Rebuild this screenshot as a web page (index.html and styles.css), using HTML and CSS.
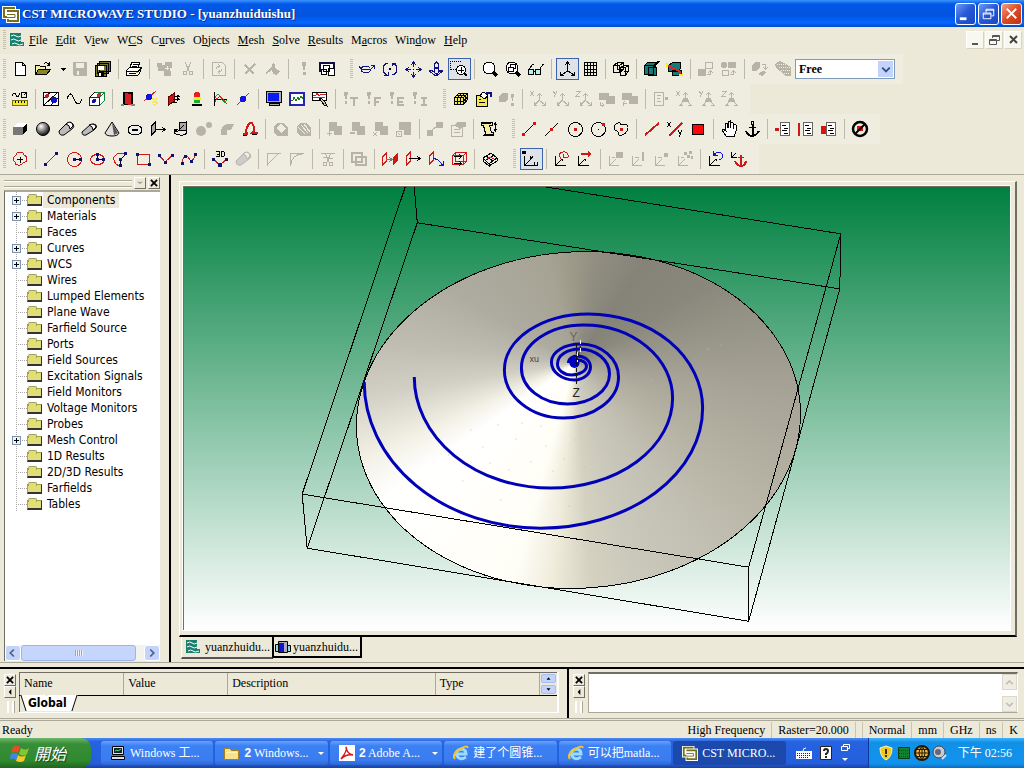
FILE: index.html
```html
<!DOCTYPE html>
<html lang="en">
<head>
  <meta charset="UTF-8">
  <meta name="viewport" content="width=device-width, initial-scale=1.0">
  <title>CST MICROWAVE STUDIO - [yuanzhuiduishu]</title>
  <link rel="stylesheet" href="styles.css">
</head>
<body>
  <header class="TitleBar">
    <svg class="TitleBar_Logo" viewBox="0 0 18 18" aria-hidden="true"><path fill="#fff" d="M0 1h14v3h4v14H4v-4H0z"/><path fill="none" stroke="#75701c" stroke-width="2" d="M13 3H2v9h3M5 6h11v10H6v-2"/><path fill="none" stroke="#75701c" d="M5 9.500h8v3H5"/></svg>
    <h1 class="TitleBar_Text">CST MICROWAVE STUDIO - [yuanzhuiduishu]</h1>
    <button class="WinButton" aria-label="Minimize"><svg viewBox="0 0 20 20"><path stroke="#fff" stroke-width="3" d="M4 15.500h7"/></svg></button>
    <button class="WinButton" aria-label="Restore"><svg viewBox="0 0 20 20"><path fill="none" stroke="#fff" d="M7.500 9V5.500h8v7H13M7 6.500h9M4.500 9.500h8v6h-8zM4 10.500h9"/></svg></button>
    <button class="WinButton -close" aria-label="Close"><svg viewBox="0 0 20 20"><path stroke="#fff" stroke-width="2" d="M5 5l10 10M15 5L5 15"/></svg></button>
  </header>

  <nav class="MenuBar" aria-label="Menu">
    <span class="Grip"></span>
    <svg class="MenuBar_Icon" viewBox="0 0 16 14" aria-hidden="true"><path fill="#17806f" d="M1 0h11v9h3v4H1z"/><path fill="none" stroke="#fff" d="M2 3q3-2 5 0t5 0M2 7q3-2 5 0t5 0M3 11q3-2 5 0t6 0"/></svg>
    <a href="#"><u>F</u>ile</a>
    <a href="#"><u>E</u>dit</a>
    <a href="#">V<u>i</u>ew</a>
    <a href="#">W<u>C</u>S</a>
    <a href="#">C<u>u</u>rves</a>
    <a href="#">O<u>b</u>jects</a>
    <a href="#"><u>M</u>esh</a>
    <a href="#"><u>S</u>olve</a>
    <a href="#"><u>R</u>esults</a>
    <a href="#">M<u>a</u>cros</a>
    <a href="#">Win<u>d</u>ow</a>
    <a href="#"><u>H</u>elp</a>
    <div class="MenuBar_Controls">
      <button class="ChildButton" aria-label="Minimize document"><svg viewBox="0 0 16 16"><path stroke="#555" stroke-width="2" d="M5 12h6"/></svg></button>
      <button class="ChildButton" aria-label="Restore document"><svg viewBox="0 0 16 16"><path fill="none" stroke="#555" d="M6.500 6V3.500h7v5H11M6 4.500h8M3.500 7.500h7v5h-7zM3 8.500h8"/></svg></button>
      <button class="ChildButton" aria-label="Close document"><svg viewBox="0 0 16 16"><path stroke="#444" stroke-width="2" d="M5 4l7 7M12 4l-7 7"/></svg></button>
    </div>
  </nav>

  <div class="ToolRow">
    <div class="Toolbar">
      <span class="Grip"></span>
      <button class="Tool" aria-label="New"><svg viewBox="0 0 18 18"><path fill="#fff" d="M4.500 2.500h7l3 3v10h-10zM11.500 2.500v3h3"/></svg></button>
      <button class="Tool" aria-label="Open"><svg viewBox="0 0 18 18"><path fill="#f4ef9c" d="M1.500 14.500v-9h4l1 1h5v3"/><path fill="#8a8628" d="M1.500 14.500l3-5h12l-4 5z"/><path d="M10 3.500q3-2 5 1M15.500 2v3h-3"/></svg></button>
      <button class="Tool -narrow" aria-label="Recent files"><svg viewBox="3 0 12 18"><path class="solid" d="M6 8h6l-3 3z"/></svg></button>
      <button class="Tool" aria-label="Save" disabled><svg viewBox="0 0 18 18"><path class="solid" fill-rule="evenodd" d="M2 2h14v14H3l-1-1zM5 3v5h8V3zM6 11v4h2v-4z"/></svg></button>
      <button class="Tool" aria-label="Save all"><svg viewBox="0 0 18 18"><path fill="#77752c" d="M5.500 1.500h11v10h-11zM3.500 3.500h11v10h-11zM1.500 5.500h11v11h-11z"/><path fill="#fff" stroke="none" d="M4 6h6v4H4z"/><path class="solid" d="M4 12h6v4H4z"/><path fill="#fff" stroke="none" d="M5 13h2v3H5z"/></svg></button>
      <span class="Sep"></span>
      <button class="Tool" aria-label="Print"><svg viewBox="0 0 18 18"><path fill="#fff" d="M5 7l2-5h8l-2 5zM1.500 10.500l3-3h12l-2 6-2 2h-11z"/><path d="M8 4.500h5M7 6.500h5M2 11.500h11l3-3M4 13.500h7"/><path stroke="#b8b020" d="M11 12.500h2"/></svg></button>
      <span class="Sep"></span>
      <button class="Tool" aria-label="Copy view" disabled><svg viewBox="0 0 18 18"><path class="solid" d="M1 3h5v2h3V2h7v6h-2v3h1v5H8v-5H2z"/><path stroke="#efede0" d="M9 8.500h4M11 6v4"/></svg></button>
      <button class="Tool" aria-label="Cut" disabled><svg viewBox="0 0 18 18"><path d="M6 2l4 9M12 2l-4 9"/><circle cx="6" cy="13" r="2"/><circle cx="12" cy="13" r="2"/></svg></button>
      <span class="Sep"></span>
      <button class="Tool" aria-label="Update" disabled><svg viewBox="0 0 18 18"><path d="M2.500 2.500h10l3 3v10h-13zM6 9q0-3 4-3M8 4l2 2-2 2M12 9q0 3-4 3M10 10l-2 2 2 2"/></svg></button>
      <span class="Sep"></span>
      <button class="Tool" aria-label="Delete" disabled><svg viewBox="0 0 18 18"><path stroke-width="2" d="M4 5l9 9M14 4L4 14"/></svg></button>
      <button class="Tool" aria-label="Rename" disabled><svg viewBox="0 0 18 18"><path class="solid" d="M1 13l7-7 1-3 2 1v4l5 3-3 4-4-1-1-4-6 4z"/></svg></button>
      <span class="Sep"></span>
      <button class="Tool" aria-label="Abort" disabled><svg viewBox="0 0 18 18"><path class="solid" d="M7 2h4l-1 8H8zM8 12h3v3H8z"/></svg></button>
      <button class="Tool" aria-label="Windows"><svg viewBox="0 0 18 18"><path fill="#fff" stroke="#101040" stroke-width="2" d="M2 3h14v8H2z"/><path fill="#fff" d="M5.500 5.500h6v6h-6zM3.500 9.500h5v5h-5zM10.500 8.500h6v7h-6z"/></svg></button>
    </div>
    <div class="Toolbar">
      <span class="Grip"></span>
      <button class="Tool" aria-label="Rotate"><svg viewBox="0 0 18 18"><g stroke="#101080"><path d="M1 6l2 3h10l3-3M13 5.500h3v3"/><path d="M13 10q-2 3-6 3-4-1-4-4 1-3 5-3 3 0 4 2"/></g></svg></button>
      <button class="Tool" aria-label="Rotate in plane"><svg viewBox="0 0 18 18"><path stroke="#101080" d="M7 3Q2 4 2 9q0 4 4 6M3 15h4v-3M4 14h2M11 15q5-1 5-6 0-4-4-6M15 3h-4v3M12 4h2"/><path class="solid" d="M8 8h2v2H8z"/></svg></button>
      <button class="Tool" aria-label="Pan"><svg viewBox="0 0 18 18"><path stroke="#101080" d="M9.500 2v5M9.500 12v5M2 9.500h5M12 9.500h5M7 5l2.500-3L12 5M7 14l2.500 3 2.500-3M5 7L2 9.500 5 12M14 7l3 2.500-3 2.500"/><path class="solid" d="M9 9h1v1H9z"/></svg></button>
      <button class="Tool" aria-label="Dynamic zoom"><svg viewBox="0 0 18 18"><path stroke="#101080" d="M9.500 2l-2 2v3h4V4zM7 8.500h5M6 10l-4 1 7 5 7-5-4-1M7.500 8v3h-2l4 3 4-3h-2V8"/></svg></button>
      <button class="Tool -pressed" aria-label="Zoom window"><svg viewBox="0 0 18 18"><path stroke-dasharray="1 1" d="M.5 10V1.500H11M1 9.500h5"/><circle cx="11" cy="10" r="4.500" fill="#fff"/><path d="M8 10.500h6M11.500 7v6"/><path stroke-width="2" d="M14 13l3 3"/></svg></button>
      <span class="Sep"></span>
      <button class="Tool" aria-label="Zoom"><svg viewBox="0 0 18 18"><circle cx="8" cy="8" r="6" fill="#fff"/><path stroke-width="3" d="M12 12l4 4"/></svg></button>
      <button class="Tool" aria-label="Zoom to selection"><svg viewBox="0 0 18 18"><circle cx="8" cy="8" r="6" fill="#fff"/><path d="M4.500 7.500h5v4h-5zM6.500 7V4.500h5v4H9"/><path stroke-width="3" d="M12 12l4 4"/></svg></button>
      <button class="Tool" aria-label="View options"><svg viewBox="0 0 18 18"><circle cx="4" cy="12" r="3" fill="#b8f0f0"/><circle cx="11" cy="12" r="3" fill="#b8f0f0"/><path d="M7 11h1M2 9l4-5 1 1M13 9l3-5 1 1"/></svg></button>
      <span class="Sep"></span>
      <button class="Tool -pressed" aria-label="Axes"><svg viewBox="0 0 18 18"><path d="M9.500 2v9l-6 4M10 11l6 4M7 5l2.500-3L12 5M6 15.500H2.500V12M13 15.500h3.500V12"/></svg></button>
      <button class="Tool" aria-label="Working plane"><svg viewBox="0 0 18 18"><path d="M3.500 2.500h12v13h-12zM6.500 2v13M9.500 2v13M12.500 2v13M3 5.500h12M3 9.500h12M3 12.500h12"/></svg></button>
      <span class="Sep"></span>
      <button class="Tool" aria-label="Wireframe"><svg viewBox="0 0 18 18"><path d="M1.500 5.500l4-3h6v7l-4 3h-6zM2 5.500h5.500v7M7.500 5.500l4-3M5.500 3v6.500h6M8.500 7.500l3-2h5v6l-3 3.500h-5zM9 7.500h4.500v7M13.500 7.500l3-2M11.500 11.500h5"/></svg></button>
      <span class="Sep"></span>
      <button class="Tool" aria-label="Cutting plane"><svg viewBox="0 0 18 18"><path fill="#157b78" d="M1.500 5.500l3-3h9l-3 3zM1.500 5.500h9v9h-9zM5.500 7.500h8v8h-8z"/><path stroke-width="2" d="M10 8l6-7"/></svg></button>
      <button class="Tool" aria-label="Field at cutting plane"><svg viewBox="0 0 18 18"><path fill="#157b78" d="M2.500 5.500l4-3h8v6l-3 3h-9zM6.500 10.500h9v5h-9z"/><path stroke="#e32222" stroke-width="2" d="M1 5l14 7"/><path stroke="#f4ef20" stroke-width="2" d="M1 3v4M13 15h4"/></svg></button>
      <span class="Sep"></span>
      <button class="Tool" aria-label="Show hidden" disabled><svg viewBox="0 0 18 18"><path class="solid" d="M1 9h8v7H1z"/><path d="M8.500 2.500h7v6h-7zM10 14.500h3.500V11M11 13l2.500-2 2.500 2"/></svg></button>
      <button class="Tool" aria-label="Hide selected" disabled><svg viewBox="0 0 18 18"><path class="solid" d="M8 2h8v6H8z"/><circle class="solid" cx="4" cy="5" r="3"/><path d="M2.500 10.500h6v5h-6zM10 14.500h3.500V11M11 13l2.500-2 2.500 2"/></svg></button>
      <span class="Sep"></span>
      <button class="Tool" aria-label="Transform" disabled><svg viewBox="0 0 18 18"><path class="solid" d="M1 5l3-3h5v5L6 11H1zM7 14l5-3 3 1-4 4z"/><path d="M11 4.500h3.500V9M12 7l2.500 2L17 7"/></svg></button>
      <button class="Tool" aria-label="Background" disabled><svg viewBox="0 0 18 18"><path class="solid" d="M1 4l5-3 6 3 5 3v9h-5l-6-5-4-3z"/><path stroke="#efede0" stroke-dasharray="1 1" d="M3 4.500h9M5 7.500h11M7 10.500h9M10 13.500h6"/></svg></button>
      <div class="Combo">
        <select aria-label="Selection mode"><option>Free</option></select>
        <svg class="Combo_Arrow" viewBox="0 0 15 17" aria-hidden="true"><path fill="none" stroke="#35507f" stroke-width="2" d="M4 7l4 4 4-4"/></svg>
      </div>
    </div>
  </div>

  <div class="ToolRow">
    <div class="Toolbar">
      <span class="Grip"></span>
      <button class="Tool" aria-label="Units"><svg viewBox="0 0 18 18"><path fill="#f4e830" stroke="#77700c" d="M1.500 10.500h15v5h-15z"/><path d="M4.500 11v2M7.500 11v2M10.500 11v2M13.500 11v2M1 6q2-5 4-1t4-2"/><circle cx="13" cy="5" r="3"/><path d="M13 5l2-2"/></svg></button>
      <span class="Sep"></span>
      <button class="Tool" aria-label="Boundary"><svg viewBox="0 0 18 18"><path fill="#fff" d="M1.500 2.500h15v13h-15z"/><path d="M1 16L16 2M1 9l8-7M8 16l8-8"/><circle cx="5" cy="6" r="2" fill="#d01818" stroke="none"/><circle cx="12" cy="10" r="3" fill="#1515c0" stroke="none"/></svg></button>
      <button class="Tool" aria-label="Frequency"><svg viewBox="0 0 18 18"><path d="M2 9Q5 0 8 7t5 7q2 0 4-5"/></svg></button>
      <button class="Tool" aria-label="Background material"><svg viewBox="0 0 18 18"><path fill="#fff" d="M1.500 7.500l5-5h10v8l-5 5h-10z"/><path stroke="#158040" d="M6.500 2.500h10v8l-5 5v-8l5-5"/><path stroke="#1515a0" d="M1.500 7.500h10v8h-10z"/><circle cx="6" cy="11" r="2" fill="#1515a0" stroke="none"/><circle cx="11" cy="5" r="2" fill="#c03030" stroke="none"/></svg></button>
      <span class="Sep"></span>
      <button class="Tool" aria-label="Ports"><svg viewBox="0 0 18 18"><path class="solid" d="M4 2h10v13H4z"/><path fill="#d42020" stroke="none" d="M6 3l6 1v11l-6-1z"/><path stroke="#888" stroke-width="2" d="M2 15h3M12 15h4"/></svg></button>
      <button class="Tool" aria-label="Discrete port"><svg viewBox="0 0 18 18"><path stroke="#d02020" d="M2 11L14 1"/><circle cx="7" cy="7" r="3" fill="#1212dd" stroke="none"/><path stroke="#f4ee30" stroke-width="2" stroke-dasharray="2 1" d="M10 9h4l-2 3h4l-5 4"/></svg></button>
      <button class="Tool" aria-label="Plane wave"><svg viewBox="0 0 18 18"><path fill="#c51818" stroke="#600" d="M3.500 7l6-4v8l-6 4z"/><path d="M9 6.500h4M8 9.500h5M7 12.500h5M12 5l2 1.500L12 8M12 8l2 1.500-2 1.500"/></svg></button>
      <button class="Tool" aria-label="Monitors"><svg viewBox="0 0 18 18"><path fill="#e52020" stroke="none" d="M6 5q0-3 3-3t3 3v2H6z"/><path fill="#f4ee20" stroke="none" d="M5 7h8v3H5z"/><path fill="#18b028" stroke="none" d="M6 10h6v3H6z"/><path stroke-width="2" d="M4 15h10"/></svg></button>
      <button class="Tool" aria-label="Voltage monitor"><svg viewBox="0 0 18 18"><path d="M3.500 2v14M3 9.500h13"/><path stroke="#18a030" d="M4 8q3-7 6 0t6 2"/><path stroke="#d02020" d="M4 12q4-8 7-4t5 6"/></svg></button>
      <button class="Tool" aria-label="Lumped element"><svg viewBox="0 0 18 18"><path stroke="#d02020" d="M3 15L15 3"/><circle cx="9" cy="9" r="3" fill="#1212dd" stroke="none"/></svg></button>
      <span class="Sep"></span>
      <button class="Tool" aria-label="Solver"><svg viewBox="0 0 18 18"><path fill="#aaa" d="M1.500 1.500h15v11h-15zM4.500 13.500h10v2h-10z"/><path fill="#0b19f4" stroke="none" d="M3 3h11v8H3z"/></svg></button>
      <button class="Tool" aria-label="Optimizer"><svg viewBox="0 0 18 18"><path fill="#fff" stroke="#2424b0" stroke-width="2" d="M2 3h14v12H2z"/><path stroke="#158020" d="M3 10h2l1-3 2 4 2-4 1 3 2-4 2 3"/></svg></button>
      <button class="Tool" aria-label="Parameter sweep"><svg viewBox="0 0 18 18"><path fill="#fff" d="M1.500 2.500h14v8h-14z"/><path stroke="#d02020" d="M2 5h3l1-2 2 3 2-2h5"/><path stroke="#158020" d="M2 8l3-1 3 1 6-1"/><path fill="#cca" d="M8 8l5 7 3 1-2-4-4-4z"/></svg></button>
      <span class="Sep"></span>
      <button class="Tool" aria-label="Transient solver" disabled><svg viewBox="0 0 18 18"><path class="solid" d="M2 2h4L5 9H3zM3 11h2v3H3z"/><path stroke-width="2" d="M8 8h8M12 8v8"/></svg></button>
      <button class="Tool" aria-label="Frequency solver" disabled><svg viewBox="0 0 18 18"><path class="solid" d="M2 2h4L5 9H3zM3 11h2v3H3z"/><path stroke-width="2" d="M10 16V8h6M10 12h4"/></svg></button>
      <button class="Tool" aria-label="Eigenmode solver" disabled><svg viewBox="0 0 18 18"><path class="solid" d="M2 2h4L5 9H3zM3 11h2v3H3z"/><path stroke-width="2" d="M16 8h-6v7h6M10 12h5"/></svg></button>
      <button class="Tool" aria-label="Integral solver" disabled><svg viewBox="0 0 18 18"><path class="solid" d="M2 2h4L5 9H3zM3 11h2v3H3z"/><path stroke-width="2" d="M10 8h6M13 8v7M10 15h6"/></svg></button>
    </div>
    <div class="Toolbar -wide">
      <span class="Grip"></span>
      <button class="Tool" aria-label="Mesh view"><svg viewBox="0 0 18 18"><path fill="#f4e84c" d="M2.500 7.500l4-4h9v6l-4 5h-9z"/><path d="M2 7.500h9.500v7M11.500 7.500l4-4M2 11.500h9.500l4-5M5.500 7v7M8.500 7v7M5.500 7.500l4-4M8.500 7.500l4-4M4 5.500h9.500V12"/></svg></button>
      <button class="Tool" aria-label="Mesh properties"><svg viewBox="0 0 18 18"><path fill="#f4e84c" d="M1.500 5.500h11v11h-11z"/><path d="M4 9.500h2M4 12.500h6"/><path fill="#fff" d="M5 6l3-4 5 3-3 4z"/><path stroke="#101080" stroke-width="2" d="M11 3h5v4"/></svg></button>
      <button class="Tool" aria-label="Update mesh" disabled><svg viewBox="0 0 18 18"><path class="solid" d="M1 6l3-3h6v6l-3 3H1zM13 4h3l-1 7h-1zM13 13h3v3h-3z"/></svg></button>
      <span class="Sep"></span>
      <button class="Tool" aria-label="X plane" disabled><svg viewBox="0 0 18 18"><path d="M1 1l4 5M5 1L1 6M10.500 4v6l-5 5M10 10l6 5M8 6l2.500-2L13 6M5 12v3h3M16 12v3h-3"/></svg></button>
      <button class="Tool" aria-label="Y plane" disabled><svg viewBox="0 0 18 18"><path d="M1 1l2 3M5 1L2 7M10.500 4v6l-5 5M10 10l6 5M8 6l2.500-2L13 6M5 12v3h3M16 12v3h-3"/></svg></button>
      <button class="Tool" aria-label="Z plane" disabled><svg viewBox="0 0 18 18"><path d="M1 1.500h4L1 6.500h4M10.500 4v6l-5 5M10 10l6 5M8 6l2.500-2L13 6M5 12v3h3M16 12v3h-3"/></svg></button>
      <button class="Tool" aria-label="Next mesh plane" disabled><svg viewBox="0 0 18 18"><path class="solid" d="M1 3h10v3h6v8H8v-4H1z"/><path d="M2 12v3h4M4 13l2 2-2 2"/></svg></button>
      <button class="Tool" aria-label="Previous mesh plane" disabled><svg viewBox="0 0 18 18"><path class="solid" d="M1 3h10v3h6v8H8v-4H1z"/><path d="M2 16v-3h4M4 11l-2 2"/></svg></button>
      <span class="Sep"></span>
      <button class="Tool" aria-label="Mesh list" disabled><svg viewBox="0 0 18 18"><path d="M2.500 2.500h9v13h-9zM5 5.500h4M5 8.500h3M5 11.500h4"/><path class="solid" d="M13 7h3v3h-3z"/></svg></button>
      <button class="Tool" aria-label="Fix X" disabled><svg viewBox="0 0 18 18"><path d="M1 1l4 5M5 1L1 6M10.500 3v6l-5 6M10 9l6 6M8 5l2.500-2L13 5M4 15h4M13 15h4"/><path class="solid" d="M8 8h5l1 4H7z"/></svg></button>
      <button class="Tool" aria-label="Fix Y" disabled><svg viewBox="0 0 18 18"><path d="M1 1l2 3M5 1L2 7M10.500 3v6l-5 6M10 9l6 6M8 5l2.500-2L13 5M4 15h4M13 15h4"/><path class="solid" d="M8 8h5l1 4H7z"/></svg></button>
      <button class="Tool" aria-label="Fix Z" disabled><svg viewBox="0 0 18 18"><path d="M1 1.500h4L1 6.500h4M10.500 3v6l-5 6M10 9l6 6M8 5l2.500-2L13 5M4 15h4M13 15h4"/><path class="solid" d="M8 8h5l1 4H7z"/></svg></button>
    </div>
  </div>

  <div class="ToolRow">
    <div class="Toolbar">
      <span class="Grip"></span>
      <button class="Tool" aria-label="Brick"><svg viewBox="0 0 18 18"><path fill="#fff" stroke="none" d="M2 7l4-4h10l-4 4z"/><path fill="#777" stroke="none" d="M2 7h10v8H2z"/><path class="solid" d="M12 7l4-4v7l-4 5z"/></svg></button>
      <button class="Tool -smooth" aria-label="Sphere"><svg viewBox="0 0 18 18"><defs><radialGradient id="ball" cx=".35" cy=".3" r=".7"><stop offset="0" stop-color="#fff"/><stop offset=".5" stop-color="#888"/><stop offset="1" stop-color="#111"/></radialGradient></defs><circle cx="9" cy="9" r="6.500" fill="url(#ball)"/></svg></button>
      <button class="Tool -smooth" aria-label="Cylinder"><svg viewBox="0 0 18 18"><path fill="#bbb" d="M2 11l8-8q4-2 6 1t-1 5l-8 6q-5 1-5-4z"/><path fill="#fff" d="M9 4l3-2q4 0 4 4l-3 3q0-4-4-5z"/></svg></button>
      <button class="Tool -smooth" aria-label="Elliptical cylinder"><svg viewBox="0 0 18 18"><path fill="#bbb" d="M2 12l8-7q4-2 6 0t-2 5l-8 5q-4 1-4-3z"/><path fill="#fff" d="M9 5l3-1q4 0 4 3l-3 3q0-4-4-5z"/></svg></button>
      <button class="Tool -smooth" aria-label="Cone"><svg viewBox="0 0 18 18"><path fill="#ddd" d="M9 2L2 13q1 3 7 3t7-3z"/><path fill="#555" stroke="none" d="M9 3l6 10-4 2z"/></svg></button>
      <button class="Tool" aria-label="Torus"><svg viewBox="0 0 18 18"><ellipse cx="9" cy="10" rx="7" ry="5" fill="#eee"/><path stroke-width="2" d="M6 10h6"/></svg></button>
      <button class="Tool" aria-label="Extrude"><svg viewBox="0 0 18 18"><path fill="#aaa" d="M2.500 6l4-4v9l-4 4z"/><path d="M7 9.500h9M13 7l3 2.500-3 2.500"/></svg></button>
      <button class="Tool" aria-label="Rotate profile"><svg viewBox="0 0 18 18"><path fill="#aaa" d="M7.500 3l7-1v8l-7 1z"/><path d="M15 9q1 7-7 6t-5-5M12 5l-7 7"/><path class="solid" d="M2 9h4l-2 4z"/></svg></button>
      <button class="Tool -smooth" aria-label="Loft" disabled><svg viewBox="0 0 18 18"><circle class="solid" cx="6" cy="11" r="5"/><circle class="solid" cx="14" cy="5" r="3"/></svg></button>
      <button class="Tool" aria-label="Bend" disabled><svg viewBox="0 0 18 18"><path class="solid" d="M3 15q-1-10 6-11h7l-3 6h-4v5z"/></svg></button>
      <button class="Tool" aria-label="Trace curve"><svg viewBox="0 0 18 18"><path stroke="#d01818" stroke-width="2" d="M2 14h4l-1-3q2-8 5-8t3 8l-2 2h6"/><path d="M2 15.500h4M11 14.500h5"/></svg></button>
      <span class="Sep"></span>
      <button class="Tool" aria-label="Blend" disabled><svg viewBox="0 0 18 18"><path class="solid" fill-rule="evenodd" d="M2 6l4-3h5l5 5v8H5l-3-3zM4 8l5 5 5-5-5-4z"/></svg></button>
      <button class="Tool" aria-label="Chamfer" disabled><svg viewBox="0 0 18 18"><path class="solid" d="M2 6l4-3h6l4 5v8H5l-3-3z"/><path stroke="#efede0" d="M3 7l7 7M6 5l7 8M9 4l6 8"/></svg></button>
      <span class="Sep"></span>
      <button class="Tool" aria-label="Add" disabled><svg viewBox="0 0 18 18"><path class="solid" d="M3 2h8v4h5v9H8v-4H3z"/><path d="M1 13.500h5M3.500 11v5"/></svg></button>
      <button class="Tool" aria-label="Subtract" disabled><svg viewBox="0 0 18 18"><path class="solid" d="M3 2h8v4h5v9H8v-4H3z"/><path stroke-width="2" d="M1 13h5"/></svg></button>
      <button class="Tool" aria-label="Intersect" disabled><svg viewBox="0 0 18 18"><path class="solid" d="M3 2h8v4h5v9H8v-4H3z"/><path d="M1 12l4 4M5 12l-4 4"/></svg></button>
      <button class="Tool" aria-label="Insert" disabled><svg viewBox="0 0 18 18"><path class="solid" d="M4 2h12v13H9v-5H4z"/><path d="M1.500 11.500h5v5h-5zM3 13l2 2"/></svg></button>
      <span class="Sep"></span>
      <button class="Tool" aria-label="Transform shape" disabled><svg viewBox="0 0 18 18"><path class="solid" d="M1 10h6v6H1zM10 2h7v6h-7z"/><path d="M6 10l5-4"/></svg></button>
      <button class="Tool" aria-label="Shape properties" disabled><svg viewBox="0 0 18 18"><path d="M2.500 5.500h11v11h-11zM5 9.500h6M5 12.500h6"/><path class="solid" d="M5 5l3-3h9v5h-4l-2 2z"/></svg></button>
      <span class="Sep"></span>
      <button class="Tool" aria-label="History list"><svg viewBox="0 0 18 18"><path fill="#f4ef9c" d="M1.500 2.500h11v3h-3l2 7h2v3h-10l2-2-2-8h-2z"/><path stroke-width="2" d="M1 3h10M4 15h9"/><path d="M15.500 3v8M14 5l1.500-2L17 5M14 9l1.500 2L17 9"/></svg></button>
    </div>
    <div class="Toolbar">
      <span class="Grip"></span>
      <button class="Tool" aria-label="Pick point"><svg viewBox="0 0 18 18"><path d="M3 15L15 3"/><path fill="#d01818" stroke="none" d="M2 13h3v3H2zM13 2h3v3h-3z"/></svg></button>
      <button class="Tool" aria-label="Pick midpoint"><svg viewBox="0 0 18 18"><path d="M2 16L15 3"/><path fill="#d01818" stroke="none" d="M7 8h3v3H7z"/></svg></button>
      <button class="Tool" aria-label="Pick circle center"><svg viewBox="0 0 18 18"><circle cx="9.500" cy="9.500" r="7"/><path fill="#d01818" stroke="none" d="M8 8h3v3H8z"/></svg></button>
      <button class="Tool" aria-label="Pick point on circle"><svg viewBox="0 0 18 18"><circle cx="9.500" cy="9.500" r="7"/><path d="M9 9.500h1"/><path fill="#d01818" stroke="none" d="M13 3h3v3h-3z"/></svg></button>
      <button class="Tool" aria-label="Pick face center"><svg viewBox="0 0 18 18"><path d="M3 5q5-5 6 0l4-1q5 2 2 7t-8 4q0-4-4-5-2-3 0-5z"/><path fill="#d01818" stroke="none" d="M8 8h3v3H8z"/></svg></button>
      <span class="Sep"></span>
      <button class="Tool" aria-label="Pick edge"><svg viewBox="0 0 18 18"><path stroke="#d01818" stroke-width="2" d="M2 15L16 3"/></svg></button>
      <button class="Tool" aria-label="Pick edge from coordinates"><svg viewBox="0 0 18 18"><path stroke="#d01818" stroke-width="2" d="M3 16L16 3"/><path d="M1 2l4 5M5 2L1 7M12 10l2 4M16 10l-3 7"/></svg></button>
      <button class="Tool" aria-label="Pick face"><svg viewBox="0 0 18 18"><path fill="#fb0808" d="M3.500 4.500h11v10h-11z"/></svg></button>
      <span class="Sep"></span>
      <button class="Tool" aria-label="Select"><svg viewBox="0 0 18 18"><path fill="#fff" d="M6 16l-4-6 1-1 3 2-1-7 2-1 1 5V2l2-1v7l1-6 2 1v6l1-5 2 1v6l-2 6z"/></svg></button>
      <button class="Tool" aria-label="Anchor"><svg viewBox="0 0 18 18"><path d="M8.500 1.500h2v3h-2zM6 7.500h7"/><path stroke-width="2" d="M9.500 5v10"/><path stroke-width="2" d="M3 11q2 5 6 5t7-5"/></svg></button>
      <span class="Sep"></span>
      <button class="Tool" aria-label="Point list"><svg viewBox="0 0 18 18"><path fill="#fff" stroke="#666" d="M6.500 2.500h9v13h-9z"/><path d="M8 5.500h4M10 8.500h4M8 10.500h5M10 13.500h4"/><path fill="#d01818" stroke="none" d="M1 8h4v3H1z"/></svg></button>
      <button class="Tool" aria-label="Edge list"><svg viewBox="0 0 18 18"><path fill="#fff" stroke="#666" d="M6.500 2.500h9v13h-9z"/><path d="M8 5.500h4M10 8.500h4M8 10.500h5M10 13.500h4"/><path stroke="#d01818" stroke-width="2" d="M2 3v13"/></svg></button>
      <button class="Tool" aria-label="Face list"><svg viewBox="0 0 18 18"><path fill="#fff" stroke="#666" d="M6.500 2.500h9v13h-9z"/><path d="M8 5.500h4M10 8.500h4M8 10.500h5M10 13.500h4"/><path fill="#e01010" stroke="none" d="M1 6h5v8H1z"/></svg></button>
      <span class="Sep"></span>
      <button class="Tool -smooth" aria-label="Clear picks"><svg viewBox="0 0 18 18"><circle cx="9" cy="9" r="7" stroke-width="2.500"/><path fill="#d01818" stroke="none" d="M6 6h6v5H6z"/><path stroke-width="2" d="M4 14L14 4"/></svg></button>
    </div>
  </div>

  <div class="ToolRow">
    <div class="Toolbar">
      <span class="Grip"></span>
      <button class="Tool" aria-label="New curve"><svg viewBox="0 0 18 18"><path stroke="#d01818" d="M5 5q0-3 4-3t4 3q3 1 3 4t-4 4q-2 3-5 2-3 0-3-3-3-2-1-5z"/><path d="M6 9.500h6M9.500 7v6"/></svg></button>
      <span class="Sep"></span>
      <button class="Tool" aria-label="Line"><svg viewBox="0 0 18 18"><path stroke="#d01818" d="M3 15L15 3"/><path class="navy" d="M2 13h3v3H2zM13 2h3v3h-3z"/></svg></button>
      <button class="Tool" aria-label="Circle"><svg viewBox="0 0 18 18"><circle cx="9.500" cy="9.500" r="7" stroke="#d01818"/><path d="M9 9.500h7"/><path class="navy" d="M8 8h3v3H8zM14 8h3v3h-3z"/></svg></button>
      <button class="Tool" aria-label="Ellipse"><svg viewBox="0 0 18 18"><ellipse cx="9.500" cy="9.500" rx="7" ry="5" stroke="#d01818"/><path d="M9.500 4v5.500h6"/><path class="navy" d="M8 3h3v3H8zM8 8h3v3H8zM14 8h3v3h-3z"/></svg></button>
      <button class="Tool" aria-label="Arc"><svg viewBox="0 0 18 18"><path stroke="#d01818" d="M15 4Q7 1 3 7q-1 6 5 9"/><path d="M9.500 10v5M9 10l6-6"/><path class="navy" d="M8 8h3v3H8zM13 2h3v3h-3zM8 14h3v3H8z"/></svg></button>
      <button class="Tool" aria-label="Rectangle"><svg viewBox="0 0 18 18"><path stroke="#d01818" d="M3.500 4.500h12v10h-12z"/><path class="navy" d="M2 3h3v3H2zM14 13h3v3h-3z"/></svg></button>
      <button class="Tool" aria-label="Polygon"><svg viewBox="0 0 18 18"><path stroke="#d01818" d="M2 5l6 7 8-7"/><path class="navy" d="M1 4h3v3H1zM7 11h3v3H7zM14 4h3v3h-3z"/></svg></button>
      <button class="Tool" aria-label="Spline"><svg viewBox="0 0 18 18"><path stroke="#d01818" d="M2 12q3-10 6-5t4 4 4-7"/><path class="navy" d="M1 12h3v3H1zM4 5h3v3H4zM10 10h3v3h-3zM14 3h3v3h-3z"/></svg></button>
      <span class="Sep"></span>
      <button class="Tool" aria-label="3D polygon"><svg viewBox="0 0 18 18"><path stroke="#d01818" d="M2 9l7 6 7-6"/><path class="navy" d="M1 8h3v3H1zM7 13h4v4H7zM14 8h3v3h-3z"/><path d="M5 1.500h3v5H5M6 4h2M10.500 1.500h2l1 1v3l-1 1h-2z"/></svg></button>
      <button class="Tool -smooth" aria-label="Curve cylinder" disabled><svg viewBox="0 0 18 18"><path fill="#ccc" d="M2 11l8-8q4-2 6 1t-1 5l-8 6q-5 1-5-4z"/><path fill="#eee" d="M9 4l3-2q4 0 4 4l-3 3q0-4-4-5z"/></svg></button>
      <span class="Sep"></span>
      <button class="Tool" aria-label="Chamfer curve" disabled><svg viewBox="0 0 18 18"><path d="M2.500 16V3.500H16M3 14L13 4"/></svg></button>
      <button class="Tool" aria-label="Blend curve" disabled><svg viewBox="0 0 18 18"><path d="M2.500 16V3.500H16M3 14Q4 5 14 4"/></svg></button>
      <span class="Sep"></span>
      <button class="Tool" aria-label="Trim curves" disabled><svg viewBox="0 0 18 18"><path d="M2 3.500h14M6 3l4 9M12 3l-4 9M4 7l10 2"/><circle cx="6" cy="14" r="2"/><circle cx="12" cy="14" r="2"/></svg></button>
      <span class="Sep"></span>
      <button class="Tool" aria-label="Copy curve" disabled><svg viewBox="0 0 18 18"><path stroke-width="2" d="M2 3h10v9H2zM6 7h10v8H6z"/></svg></button>
      <span class="Sep"></span>
      <button class="Tool" aria-label="Cover curve"><svg viewBox="0 0 18 18"><path stroke="#d01818" d="M1.500 7l4-4v8l-4 4z"/><path fill="#d01818" stroke="none" d="M12 7l5-4v8l-5 4z"/><path stroke="#777" d="M5 9.500h6M8 7l3 2.500L8 12"/></svg></button>
      <button class="Tool" aria-label="Extrude curve"><svg viewBox="0 0 18 18"><path stroke="#d01818" d="M2.500 6l4-4v9l-4 4z"/><path d="M5 8.500h11M13 6l3 2.500-3 2.500M14 7v3"/></svg></button>
      <button class="Tool" aria-label="Sweep curve"><svg viewBox="0 0 18 18"><path stroke="#d01818" d="M2.500 6l4-4v8l-4 4z"/><path stroke="#1212cc" d="M6 8l5 2 5 5M12 15.500h4.500V11M14 14.500h2"/></svg></button>
      <button class="Tool" aria-label="Loft curves"><svg viewBox="0 0 18 18"><path stroke="#d01818" d="M2.500 5.500l3-3h11v9l-3 3h-11zM2 5.500h11.500v9M13.500 5.500l3-3M5.500 3v8.500h11"/><path d="M4 6.500h7M9 4l2 2.500L9 9M4 13.500h7M9 11l2 2.500L9 16"/></svg></button>
      <span class="Sep"></span>
      <button class="Tool" aria-label="Sheet"><svg viewBox="0 0 18 18"><path fill="#eee" d="M2 8l8-5 6 5-8 6z"/><path d="M2 8v3l6 5v-2M8 16l8-5V8M5 6l7 5M5 10l8-5"/><path stroke="#d01818" d="M6 9l3-2 4 2"/></svg></button>
    </div>
    <div class="Toolbar -wide">
      <span class="Grip"></span>
      <button class="Tool -pressed" aria-label="Local WCS"><svg viewBox="0 0 18 18"><path d="M2.500 6v9.500h9M3 15l6-6M0 1l1 3 1-3 1 3 1-3M8 6l1 3 2-3M12.500 12v3.500h3V12"/></svg></button>
      <span class="Sep"></span>
      <button class="Tool" aria-label="Rotate WCS"><svg viewBox="0 0 18 18"><path d="M2.500 6v9.500h10M3 15l6-6M8 9.500h1.500V11"/><path stroke="#d01818" d="M8 9Q4 3 10 2t5 6l-5-1M10 4v3h3"/></svg></button>
      <button class="Tool" aria-label="Move WCS"><svg viewBox="0 0 18 18"><path d="M2.500 6v9.500h10M3 15l6-6M8 9.500h1.500V11"/><path stroke="#d01818" stroke-width="2" d="M5 4h10"/><path fill="#d01818" stroke="none" d="M12 1l4 3-4 3z"/></svg></button>
      <span class="Sep"></span>
      <button class="Tool" aria-label="Align with face" disabled><svg viewBox="0 0 18 18"><path d="M2.500 6v9.500h9M3 15l6-6M5 7.500h3"/><path class="solid" d="M9 2h7v6H9z"/></svg></button>
      <button class="Tool" aria-label="Align with edge" disabled><svg viewBox="0 0 18 18"><path d="M2.500 6v9.500h9M3 15l6-6M5 7.500h4"/><path stroke-width="2" d="M13 2v9"/></svg></button>
      <button class="Tool" aria-label="Align with point" disabled><svg viewBox="0 0 18 18"><path d="M2.500 6v9.500h9M3 15l6-6M5 7.500h4"/><path class="solid" d="M11 3h4v4h-4z"/></svg></button>
      <button class="Tool" aria-label="Align with points" disabled><svg viewBox="0 0 18 18"><path d="M2.500 6v9.500h9M3 15l6-6M5 7.500h3"/><path class="solid" d="M8 2h3v3H8zM13 1h3v3h-3zM11 5h3v3h-3zM15 6h2v3h-2z"/></svg></button>
      <span class="Sep"></span>
      <button class="Tool" aria-label="Undo WCS"><svg viewBox="0 0 18 18"><path d="M2.500 6v9.500h10M3 15l6-6M8 9.500h1.500V11"/><path stroke="#1212cc" d="M7 4q6-4 8 0t-3 6M6.500 1v4.500H11M7 4h2"/></svg></button>
      <button class="Tool" aria-label="Anchor WCS"><svg viewBox="0 0 18 18"><path d="M1.500 2v5.500h5M2 7l4-4"/><path stroke="#d01818" stroke-width="2" d="M11 5v10M5 11q2 5 6 5t5-5"/><path stroke="#d01818" d="M8 7.500h6"/></svg></button>
    </div>
  </div>

  <main class="Work">
    <aside class="Navigator">
      <div class="Navigator_Head">
        <span class="Navigator_Grip"></span>
        <button class="SmallButton" aria-label="Panel menu" disabled><svg viewBox="0 0 9 9"><path d="M1 3h7L4.500 6z"/></svg></button>
        <button class="SmallButton" aria-label="Close panel"><svg viewBox="0 0 9 9"><path fill="none" stroke="#000" stroke-width="2" d="M1 1l7 7M8 1L1 8"/></svg></button>
      </div>
      <div class="Navigator_Body">
        <ul class="Tree">
          <li><span class="Tree_Branch"><button aria-label="Expand Components"></button></span><i class="Folder"></i><a class="-selected" href="#">Components</a></li>
          <li><span class="Tree_Branch"><button aria-label="Expand Materials"></button></span><i class="Folder"></i><a href="#">Materials</a></li>
          <li><span class="Tree_Branch"></span><i class="Folder"></i><a href="#">Faces</a></li>
          <li><span class="Tree_Branch"><button aria-label="Expand Curves"></button></span><i class="Folder"></i><a href="#">Curves</a></li>
          <li><span class="Tree_Branch"><button aria-label="Expand WCS"></button></span><i class="Folder"></i><a href="#">WCS</a></li>
          <li><span class="Tree_Branch"></span><i class="Folder"></i><a href="#">Wires</a></li>
          <li><span class="Tree_Branch"></span><i class="Folder"></i><a href="#">Lumped Elements</a></li>
          <li><span class="Tree_Branch"></span><i class="Folder"></i><a href="#">Plane Wave</a></li>
          <li><span class="Tree_Branch"></span><i class="Folder"></i><a href="#">Farfield Source</a></li>
          <li><span class="Tree_Branch"></span><i class="Folder"></i><a href="#">Ports</a></li>
          <li><span class="Tree_Branch"></span><i class="Folder"></i><a href="#">Field Sources</a></li>
          <li><span class="Tree_Branch"></span><i class="Folder"></i><a href="#">Excitation Signals</a></li>
          <li><span class="Tree_Branch"></span><i class="Folder"></i><a href="#">Field Monitors</a></li>
          <li><span class="Tree_Branch"></span><i class="Folder"></i><a href="#">Voltage Monitors</a></li>
          <li><span class="Tree_Branch"></span><i class="Folder"></i><a href="#">Probes</a></li>
          <li><span class="Tree_Branch"><button aria-label="Expand Mesh Control"></button></span><i class="Folder"></i><a href="#">Mesh Control</a></li>
          <li><span class="Tree_Branch"></span><i class="Folder"></i><a href="#">1D Results</a></li>
          <li><span class="Tree_Branch"></span><i class="Folder"></i><a href="#">2D/3D Results</a></li>
          <li><span class="Tree_Branch"></span><i class="Folder"></i><a href="#">Farfields</a></li>
          <li><span class="Tree_Branch"></span><i class="Folder"></i><a href="#">Tables</a></li>
        </ul>
        <div class="ScrollBar">
          <button aria-label="Scroll left"><svg viewBox="0 0 16 16"><path d="M9 4L5 8l4 4"/></svg></button>
          <div class="ScrollBar_Track"><span class="ScrollBar_Thumb"></span></div>
          <button aria-label="Scroll right"><svg viewBox="0 0 16 16"><path d="M6 4l4 4-4 4"/></svg></button>
        </div>
      </div>
    </aside>

    <section class="Document">
      <div class="Document_Frame">
        <svg class="Scene" viewBox="184 187 825 443" preserveAspectRatio="xMidYMid slice" role="img" aria-label="Cone with two spiral curves">
          <defs>
            <clipPath id="disc"><ellipse cx="578" cy="420" rx="222" ry="168" transform="rotate(-3.500 578 420)"/></clipPath>
          </defs>
          <foreignObject x="350" y="245" width="460" height="350" clip-path="url(#disc)"><div class="Cone"></div></foreignObject>
          <ellipse class="Wire" cx="578" cy="420" rx="222" ry="168" transform="rotate(-3.500 578 420)"/>
          <!-- bounding box -->
          <path class="Wire" d="M405 187L302 494L307 548L748 621L748 567L302 494M414 187L417 223L839 289L840 234L544 187M417 223L307 548M840 234L748 567M839 289L748 621"/>
          <!-- speckles on the lit side -->
          <path class="Speckle" d="M470 430h1M482 447h1M497 425h1M515 439h1M530 462h1M545 446h1M552 471h1M448 455h1M462 481h1M500 500h1M521 423h1M574 440h1M590 431h1M603 449h1M617 435h1M634 420h1M563 459h1M584 467h1M598 489h1M540 426h1M432 352h1M508 470h1M489 463h1M583 545h1M611 427h1M568 506h1M650 380h1M707 349h1M720 345h1"/>
          <!-- each arm is a chain of quarter ellipses -->
          <path class="Spiral" d="M364 382A176 146 0 0 0 540 528A162 120 0 0 0 702 408A114 94 0 0 0 588 314A84 56 0 0 0 504 370A59 48 0 0 0 563 418A55 41 0 0 0 618 377A38 33 0 0 0 580 344A29 18 0 0 0 551 362A23 18 0 0 0 574 380A16 13 0 0 0 590 367A13 11 0 0 0 577 356A9 7 0 0 0 568 363"/>
          <path class="Spiral" d="M414 377A136 111 0 0 0 550 488A122 90 0 0 0 672 398A89 73 0 0 0 583 325A62 43 0 0 0 521 368A46 36 0 0 0 567 404A42 30 0 0 0 609 374A30 25 0 0 0 579 349A22 15 0 0 0 557 364A14 11 0 0 0 571 375A15 9 0 0 0 586 366A9 6 0 0 0 577 360"/>
          <circle cx="574" cy="363" r="5" fill="#0000c0"/>
          <path class="AxisLine" d="M576 344v40M580 346l-4 18"/>
          <path class="AxisLine -light" d="M580 340v12M577 352v10"/>
          <text class="AxisLabel -dim" x="569" y="341">Y</text>
          <text class="AxisLabel -faint" x="580" y="338">w</text>
          <text class="AxisLabel -faint -dark" x="529" y="362">xu</text>
          <text class="AxisLabel" x="572" y="397">Z</text>
        </svg>
      </div>
      <div class="DocTabs">
        <button class="DocTab -active"><svg viewBox="0 0 16 14" aria-hidden="true"><path fill="#17806f" d="M1 0h11v9h3v4H1z"/><path fill="none" stroke="#fff" d="M2 3q3-2 5 0t5 0M2 7q3-2 5 0t5 0M3 11q3-2 5 0t6 0"/></svg>yuanzhuidu...</button>
        <button class="DocTab"><svg viewBox="0 0 16 14" aria-hidden="true"><path fill="#8ed8e8" stroke="#000" d="M.5 4.500h4v7h-4zM11.500 5.500h4v6h-4z"/><path fill="#aab" stroke="#000" d="M3.500 1.500h9v11h-9z"/><path fill="#0c18c8" d="M4 3h5v9H4z"/></svg>yuanzhuidu...</button>
      </div>
    </section>
  </main>

  <div class="Docks">
    <section class="Dock -params">
      <div class="Dock_Side">
        <button class="SmallButton" aria-label="Close parameters"><svg viewBox="0 0 9 9"><path fill="none" stroke="#000" stroke-width="2" d="M1 1l7 7M8 1L1 8"/></svg></button>
        <button class="SmallButton" aria-label="Collapse parameters"><svg viewBox="0 0 9 9"><path d="M6 1v7L3 4.500z"/></svg></button>
        <span class="Dock_Grip"></span>
      </div>
      <div class="Params">
        <div class="Params_Head">
          <table>
            <thead><tr><th class="-name">Name</th><th class="-value">Value</th><th class="-desc">Description</th><th class="-type">Type</th></tr></thead>
          </table>
          <div class="Spin"><button aria-label="Up"><svg viewBox="0 0 15 9"><path d="M5 6h5L7.500 3z"/></svg></button><button aria-label="Down"><svg viewBox="0 0 15 9"><path d="M5 3h5L7.500 6z"/></svg></button></div>
        </div>
        <button class="Params_Tab"><span>Global</span></button>
      </div>
    </section>
    <section class="Dock -messages">
      <div class="Dock_Side">
        <button class="SmallButton" aria-label="Close messages"><svg viewBox="0 0 9 9"><path fill="none" stroke="#000" stroke-width="2" d="M1 1l7 7M8 1L1 8"/></svg></button>
        <button class="SmallButton" aria-label="Collapse messages"><svg viewBox="0 0 9 9"><path d="M6 1v7L3 4.500z"/></svg></button>
        <span class="Dock_Grip"></span>
      </div>
      <div class="Messages">
        <textarea aria-label="Messages" readonly></textarea>
        <div class="Messages_Scroll"><button aria-label="Scroll up" disabled><svg viewBox="0 0 16 16"><path d="M4 10l4-4 4 4"/></svg></button><button aria-label="Scroll down" disabled><svg viewBox="0 0 16 16"><path d="M4 6l4 4 4-4"/></svg></button></div>
      </div>
    </section>
  </div>

  <footer class="StatusBar">
    <span class="StatusBar_Text">Ready</span>
    <span>High Frequency</span>
    <span>Raster=20.000</span>
    <span class="-empty"></span>
    <span>Normal</span>
    <span>mm</span>
    <span>GHz</span>
    <span>ns</span>
    <span>K</span>
  </footer>

  <div class="TaskBar">
    <button class="Start"><svg viewBox="0 0 20 18" aria-hidden="true"><path fill="#ea4b22" d="M3 3q4-3 7 0L8 9Q5 7 1 9z"/><path fill="#83c633" d="M11 4q4 3 8 0l-2 6q-4 3-8 0z"/><path fill="#3e87e8" d="M1 10q4-2 7 0l-2 6q-3-3-7 0z"/><path fill="#f6c927" d="M8 11q4 3 8 0l-2 6q-4 2-8 0z"/></svg><span lang="zh-Hant">開始</span></button>
    <div class="Tasks">
      <button class="Task" lang="zh-Hant"><svg viewBox="0 0 16 16"><path fill="#ddd" stroke="#000" d="M2.500 1.500h11v8h-11zM1.500 11.500h13v3h-13z"/><path fill="#123" d="M4 3h8v5H4z"/><path fill="none" stroke="#4e6" d="M5 6l2-1 1 1 3-2"/></svg><span>Windows 工...</span></button>
      <button class="Task -group"><svg viewBox="0 0 16 16"><path fill="#f8e28a" stroke="#a8801c" d="M.5 3.500h5l2 2h7v9H.5z"/><path fill="#fff3b8" d="M2 7h11v1H2z"/></svg><span><b>2</b> Windows...</span></button>
      <button class="Task -group"><svg viewBox="0 0 16 16"><path fill="#fff" d="M0 0h16v16H0z"/><path fill="none" stroke="#d01818" stroke-width="1.500" d="M7 2q2 3-5 12 5-5 12-4-6-1-7-8z"/></svg><span><b>2</b> Adobe A...</span></button>
      <button class="Task" lang="zh-Hans"><svg viewBox="0 0 16 16"><path fill="none" stroke="#9bdcf8" stroke-width="3" d="M13 12Q7 16 4 11T8 4q5 0 5 5H4"/><path fill="none" stroke="#f4c430" stroke-width="2" d="M2 14Q-2 9 9 3q5-3 6 0"/></svg><span>建了个圆锥...</span></button>
      <button class="Task" lang="zh-Hans"><svg viewBox="0 0 16 16"><path fill="none" stroke="#9bdcf8" stroke-width="3" d="M13 12Q7 16 4 11T8 4q5 0 5 5H4"/><path fill="none" stroke="#f4c430" stroke-width="2" d="M2 14Q-2 9 9 3q5-3 6 0"/></svg><span>可以把matla...</span></button>
      <button class="Task -active"><svg viewBox="0 0 18 18"><path fill="#fff" d="M0 1h14v3h4v14H4v-4H0z"/><path fill="none" stroke="#75701c" stroke-width="2" d="M13 3H2v9h3M5 6h11v10H6v-2"/><path fill="none" stroke="#75701c" d="M5 9.500h8v3H5"/></svg><span>CST MICRO...</span></button>
    </div>
    <div class="LangBar">
      <svg viewBox="0 0 16 16" aria-label="Keyboard"><path fill="#fff" d="M0 6h16v8H0z"/><path fill="none" stroke="#224" stroke-dasharray="1 1" d="M1 8.500h14M1 10.500h14M3 12.500h10"/><path fill="none" stroke="#fff" d="M7 6q0-3 3-3"/></svg>
      <svg viewBox="0 0 16 16" aria-label="Help"><path fill="#fff" stroke="#222" d="M2.500 1.500h11v13h-11z"/><path fill="none" stroke="#222" stroke-width="2" d="M6 6q0-2 2-2t2 2-2 3v1M8 11v2"/></svg>
      <svg class="-tall" viewBox="0 0 10 20" aria-label="Restore language bar"><path fill="none" stroke="#fff" d="M3.500 3V1.500h6v4H8M1.500 3.500h6v4h-6z"/><path fill="#fff" d="M2 15h6l-3 3z"/></svg>
    </div>
    <div class="Tray">
      <svg viewBox="0 0 16 16" aria-label="Security"><path fill="#f4c820" stroke="#fff5b8" d="M8 1l6 2q0 9-6 12Q2 12 2 3z"/><path stroke="#332" stroke-width="2" d="M8 4v5M8 10v2"/></svg>
      <svg viewBox="0 0 16 16" aria-label="Processor"><path fill="#128030" stroke="#054018" d="M2.500 2.500h11v11h-11z"/><path fill="none" stroke="#052" stroke-dasharray="1 1" d="M3 5.500h10M3 8.500h10M3 11.500h10"/></svg>
      <svg viewBox="0 0 16 16" aria-label="Network"><circle cx="8" cy="8" r="7" fill="#f4b848" stroke="#201800" stroke-width="2"/><path fill="none" stroke="#201800" d="M1 8h14M8 1v14M8 1Q2 8 8 15M8 1q6 7 0 14M3 4.500h10M3 11.500h10"/></svg>
      <svg viewBox="0 0 16 16" aria-label="Volume"><circle cx="7" cy="7" r="6" fill="#c8ccd0" stroke="#445"/><circle cx="6" cy="7" r="3" fill="#667"/><path fill="none" stroke="#dde" stroke-width="2" d="M10 14l4-4"/></svg>
      <time lang="zh-Hant">下午 02:56</time>
    </div>
  </div>
</body>
</html>
```
FILE: styles.css
```css
:root {
  --face: #ece9d8;
  --bar: #efede0;
  --shadow: #aca899;
  --dark: #716f64;
  --serif: "Liberation Serif", "Noto Sans CJK TC", serif;
  --sans: "DejaVu Sans Condensed", "Liberation Sans", sans-serif;
}

* {
  box-sizing: border-box;
}

body {
  margin: 0;
  height: 100vh;
  display: flex;
  flex-direction: column;
  overflow: hidden;
  background: var(--face);
  color: #000;
  font: 12px/16px var(--serif);
}

button {
  margin: 0;
  padding: 0;
  border: 0;
  background: none;
  color: inherit;
  font: inherit;
}

a {
  color: inherit;
  text-decoration: none;
}

svg {
  display: block;
  flex: none;
}

/* Title bar */
.TitleBar {
  display: flex;
  align-items: center;
  gap: 2px;
  flex: none;
  height: 27px;
  padding: 0 2px;
  background: linear-gradient(#3a93ff, #0358e8 15%, #0253e0 55%, #0566ff 85%, #0148c8);
}
.TitleBar_Logo {
  width: 18px;
  height: 18px;
}
.TitleBar_Text {
  flex: 1;
  margin: 0;
  color: #fff;
  font-size: 13px;
  font-weight: bold;
  text-shadow: 1px 1px #0b2a80;
}
.WinButton {
  width: 21px;
  height: 22px;
  border: 1px solid #fff;
  border-radius: 3px;
  background: linear-gradient(135deg, #6f9cf4, #2456d6 50%, #1a49c0);
}
.WinButton.-close {
  background: linear-gradient(135deg, #f0a088, #dc4a26 50%, #c03410);
}

/* Menu */
.MenuBar {
  display: flex;
  align-items: center;
  flex: none;
  height: 26px;
  margin-bottom: 1px;
  padding-right: 2px;
}
.MenuBar_Icon {
  width: 16px;
  height: 14px;
}
.MenuBar a {
  padding: 0 4px;
}
.MenuBar_Controls {
  display: flex;
  gap: 1px;
  margin-left: auto;
}
.ChildButton {
  width: 18px;
  height: 18px;
  background: #f8f7f0;
  border: 1px solid #fff;
  border-right-color: #d8d4c0;
  border-bottom-color: #d8d4c0;
}

/* Toolbars */
.ToolRow {
  display: flex;
  flex: none;
  height: 30px;
}
.Toolbar {
  display: flex;
  align-items: center;
  padding-right: 8px;
  background: var(--bar);
}
.Toolbar.-wide .Grip {
  width: 10px;
}
.Grip {
  flex: none;
  width: 9px;
  height: 20px;
  background: repeating-linear-gradient(#c4c0ad 0 1px, transparent 1px 2px) 3px 0 / 3px 100% no-repeat;
}
.Tool {
  flex: none;
  display: grid;
  place-items: start;
  width: 23px;
  height: 22px;
  padding: 1px;
  border: 1px solid transparent;
}
.Tool svg {
  width: 18px;
  height: 18px;
  fill: none;
  stroke: currentColor;
  shape-rendering: crispEdges;
}
.Tool.-smooth svg {
  shape-rendering: auto;
}
.Tool .solid {
  fill: currentColor;
  stroke: none;
}
.Tool .navy {
  fill: #101070;
  stroke: none;
}
.Tool:disabled {
  color: #b7b4a6;
}
.Tool.-pressed {
  border-color: #3a62ad;
  background: #dfe3e8;
}
.Tool.-narrow {
  width: 14px;
}
.Tool.-narrow svg {
  width: 12px;
}
.Sep {
  flex: none;
  width: 8px;
  height: 20px;
  background: linear-gradient(#bdb9a8, #bdb9a8) 3px 0 / 1px 100% no-repeat;
}
.Combo {
  position: relative;
  width: 100px;
  height: 20px;
}
.Combo select {
  appearance: none;
  display: block;
  width: 100%;
  height: 100%;
  padding: 0 3px;
  border: 1px solid #7f9db9;
  border-radius: 0;
  background: #fff;
  color: #000;
  font: bold 12px/18px var(--serif);
}
.Combo_Arrow {
  position: absolute;
  top: 2px;
  right: 2px;
  width: 15px;
  height: 16px;
  background: #c3d3fb;
  pointer-events: none;
}

/* Work area */
.Work {
  display: flex;
  flex: 1;
  min-height: 0;
  border-top: 1px solid var(--shadow);
  border-bottom: 1px solid var(--shadow);
}
.Navigator {
  display: flex;
  flex-direction: column;
  width: 169px;
  padding: 2px 9px 1px 4px;
}
.Navigator_Head {
  display: flex;
  gap: 2px;
  height: 12px;
  margin-bottom: 1px;
}
.Navigator_Grip {
  flex: 1;
  height: 7px;
  margin-top: 3px;
  border: solid var(--shadow);
  border-width: 1px 0;
  box-shadow: inset 0 1px #fff, 0 1px #fff;
}
.SmallButton {
  flex: none;
  display: grid;
  place-items: center;
  width: 12px;
  height: 12px;
  border: 1px solid #fff;
  border-right-color: var(--dark);
  border-bottom-color: var(--dark);
}
.SmallButton svg {
  width: 8px;
  height: 8px;
}
.SmallButton:disabled svg {
  fill: var(--shadow);
}
.Navigator_Body {
  display: flex;
  flex-direction: column;
  flex: 1;
  min-height: 0;
  border: 1px solid var(--dark);
  border-width: 2px 0 0 1px;
  border-top-color: var(--shadow);
  background: #fff;
}
.Tree {
  flex: 1;
  min-height: 0;
  margin: 0;
  padding: 0 0 0 7px;
  list-style: none;
  font: 12px/16px var(--sans);
}
.Tree li {
  display: flex;
  align-items: center;
  height: 16px;
}
.Tree a {
  padding: 0 4px;
}
.Tree a.-selected {
  background: var(--face);
}
/* dotted connectors, vertical then horizontal */
.Tree_Branch {
  display: flex;
  align-items: center;
  width: 15px;
  height: 16px;
  background:
    repeating-linear-gradient(#a8a8a8 0 1px, transparent 1px 2px) 4px 0 / 1px 100% no-repeat,
    repeating-linear-gradient(90deg, #a8a8a8 0 1px, transparent 1px 2px) 4px 8px / 11px 1px no-repeat;
}
.Tree_Branch button {
  width: 9px;
  height: 9px;
  border: 1px solid #7b92ae;
  background:
    linear-gradient(#000, #000) 50% 50% / 5px 1px no-repeat,
    linear-gradient(#000, #000) 50% 50% / 1px 5px no-repeat,
    #f4f2ea;
}
.Folder {
  position: relative;
  width: 15px;
  height: 10px;
  margin: 2px 1px 0 0;
  border: 1px solid #a3a05a;
  border-right-color: #333;
  border-bottom: 2px solid #333;
  background: #e0de74;
}
.Folder::before {
  content: "";
  position: absolute;
  left: 0;
  top: -3px;
  width: 7px;
  height: 3px;
  border: 1px solid #a3a05a;
  border-bottom: 0;
  border-radius: 2px 2px 0 0;
  background: #e0de74;
}
.ScrollBar {
  display: flex;
  height: 16px;
  background: #f3f3ec;
}
.ScrollBar button {
  width: 16px;
  border: 1px solid #fff;
  border-radius: 3px;
  background: #c3d3fb;
}
.ScrollBar button svg,
.Messages_Scroll svg {
  fill: none;
  stroke: #4d6185;
  stroke-width: 2;
}
.ScrollBar_Track {
  flex: 1;
  padding-right: 8px;
}
.ScrollBar_Thumb {
  display: block;
  height: 16px;
  border: 1px solid #9cb4ec;
  border-radius: 3px;
  background:
    repeating-linear-gradient(90deg, #8ba6e4 0 1px, #eef3ff 1px 2px) 50% 50% / 8px 6px no-repeat,
    #c6d5fc;
}

/* 3D view */
.Document {
  display: flex;
  flex-direction: column;
  flex: 1;
  min-width: 0;
  padding: 6px 7px 3px 8px;
  border-left: 2px solid #000;
}
.Document_Frame {
  flex: 1;
  min-height: 0;
  padding: 4px 5px 5px 3px;
  border: 1px solid #fff;
  border-right: 2px solid var(--dark);
  border-bottom: 2px solid #000;
}
.Scene {
  width: 100%;
  height: 100%;
  border-top: 1px solid var(--dark);
  border-left: 1px solid var(--dark);
  outline: 1px solid #fff;
  background: linear-gradient(#008040, #fff);
}
.Cone {
  width: 460px;
  height: 350px;
  background: conic-gradient(from 0deg at 225px 118px,
    #9b9888 0deg, #8f8c80 14deg, #858278 35deg, #8a877c 60deg, #989589 80deg,
    #a8a598 100deg, #b5b2a4 122deg, #c2c0b2 145deg, #cbc9bc 165deg,
    #d4d1c0 176deg, #efecdc 186deg, #fffef6 196deg, #fff 235deg,
    #f2f0e5 246deg, #d2d0c5 261deg, #bfbdb2 276deg, #aeaca0 300deg,
    #a9a79a 325deg, #a6a394 345deg, #9b9888 360deg);
}
.Wire {
  fill: none;
  stroke: #000;
  shape-rendering: crispEdges;
}
.Spiral {
  fill: none;
  stroke: #0000b8;
  stroke-width: 3;
}
.Speckle {
  stroke: #c9c28c;
}
.AxisLine {
  fill: none;
  stroke: #111;
  stroke-dasharray: 4 2;
}
.AxisLine.-light {
  stroke: #fff;
  stroke-dasharray: 4 4;
}
.AxisLabel {
  font: 12px "Liberation Sans", sans-serif;
  fill: #222;
}
.AxisLabel.-dim {
  fill: #666;
}
.AxisLabel.-faint {
  font-size: 9px;
  fill: #888;
}
.AxisLabel.-dark {
  fill: #444;
}
.DocTabs {
  display: flex;
  align-items: flex-start;
  height: 22px;
  padding-left: 2px;
}
.DocTab {
  display: flex;
  align-items: center;
  gap: 2px;
  height: 21px;
  padding: 0 2px 0 1px;
  border: solid #000;
  border-width: 0 2px 2px 1px;
}
.DocTab.-active {
  gap: 4px;
  height: 22px;
  padding-left: 3px;
  border-color: #fff #000 #555 #fff;
  border-right-width: 1px;
}
.DocTab svg {
  width: 16px;
  height: 14px;
}

/* Bottom docks */
.Docks {
  display: flex;
  flex: none;
  margin-top: 4px;
  border-top: 2px solid #000;
  border-bottom: 1px solid var(--shadow);
}
.Dock {
  display: flex;
  gap: 3px;
  padding: 3px 8px 5px 4px;
}
.Dock.-params {
  flex: 568 1 0;
}
.Dock.-messages {
  flex: 456 1 0;
  padding-right: 6px;
  border-left: 2px solid #000;
}
.Dock_Side {
  display: flex;
  flex-direction: column;
  align-items: center;
  width: 12px;
  padding-top: 2px;
}
.Dock_Grip {
  width: 7px;
  flex: 1;
  margin-top: 3px;
  border: solid #fff;
  border-width: 0 2px;
  box-shadow: 1px 0 var(--shadow);
}
.Params {
  flex: 1;
  min-width: 0;
  height: 41px;
  border: solid #fff;
  border-width: 0 2px 1px 0;
  box-shadow: inset 1px 1px var(--dark);
}
.Params_Head {
  display: flex;
  height: 24px;
  padding: 1px 0 0 1px;
  border-bottom: 1px solid #000;
}
.Params table {
  flex: 1;
  height: 22px;
  border-collapse: collapse;
  table-layout: fixed;
}
.Params th {
  padding: 0 4px 3px;
  border-right: 1px solid var(--shadow);
  font-weight: normal;
  text-align: left;
}
.Params .-name,
.Params .-value,
.Params .-type {
  width: 20%;
}
.Params .-desc {
  width: 40%;
}
.Spin {
  display: flex;
  flex-direction: column;
  gap: 2px;
  width: 17px;
  padding: 1px;
}
.Spin button {
  height: 9px;
  border: 1px solid #a9bdf0;
  border-radius: 2px;
  background: #c3d3fb;
}
.Spin svg {
  width: 13px;
  height: 7px;
}
.Params_Tab {
  position: relative;
  display: block;
  height: 16px;
  margin: -1px 0 0 4px;
  padding: 0 8px 0 5px;
  font: bold 12px/16px var(--sans);
}
/* slanted sides of the sheet tab */
.Params_Tab::before,
.Params_Tab::after {
  content: "";
  position: absolute;
  top: 0;
  bottom: 0;
  background: #fff;
}
.Params_Tab::before {
  left: 0;
  right: 50%;
  border-left: 1px solid #000;
  transform: skewX(18deg);
}
.Params_Tab::after {
  left: 40%;
  right: 0;
  border-right: 1px solid #000;
  transform: skewX(-18deg);
}
.Params_Tab span {
  position: relative;
  z-index: 1;
}
.Messages {
  display: flex;
  flex: 1;
  height: 41px;
  border: 1px solid var(--shadow);
  border-top: 2px solid var(--dark);
  border-right-color: #fff;
  background: #fff;
}
.Messages textarea {
  flex: 1;
  min-width: 0;
  border: 0;
  padding: 2px;
  resize: none;
  background: #fff;
  font: inherit;
}
.Messages_Scroll {
  display: flex;
  flex-direction: column;
  justify-content: space-between;
  width: 15px;
}
.Messages_Scroll button {
  height: 16px;
  border: 1px solid #dcd9cc;
  background: #efede4;
}
.Messages_Scroll svg {
  stroke: #c4c1b2;
}

/* Status bar */
.StatusBar {
  display: flex;
  align-items: center;
  flex: none;
  height: 18px;
  margin-top: 1px;
  border-top: 1px solid var(--shadow);
}
.StatusBar span {
  padding: 0 6px;
  border-right: 1px solid #c9c5b2;
}
.StatusBar .StatusBar_Text {
  flex: 1;
  padding: 0 2px;
  border: 0;
}
.StatusBar .-empty {
  height: 16px;
  padding: 0 3px;
}
.StatusBar span:last-child {
  border: 0;
}

/* Task bar */
.TaskBar {
  display: flex;
  flex: none;
  height: 30px;
  color: #fff;
  background: linear-gradient(#4a8cf4, #2663e0 12%, #245edb 85%, #1941a5);
}
.Start {
  display: flex;
  align-items: center;
  gap: 4px;
  width: 91px;
  padding-left: 10px;
  border-radius: 0 10px 10px 0;
  background: linear-gradient(#6cb86a, #388e38 20%, #2f8a2f 75%, #1f651f);
  font: italic 16px/24px "Noto Sans CJK TC", sans-serif;
  text-shadow: 1px 1px 1px #143c14;
}
.Start svg {
  width: 20px;
  height: 18px;
}
.Tasks {
  display: flex;
  flex: 1;
  gap: 2px;
  min-width: 0;
  padding: 3px 8px 3px 10px;
}
.Task {
  display: flex;
  align-items: center;
  gap: 4px;
  flex: 1;
  min-width: 0;
  padding: 0 9px;
  border-radius: 3px;
  background: linear-gradient(#6aa2ff, #3c81f3 20%, #3a7cf0 80%, #2d66d0);
  white-space: nowrap;
}
.Task svg {
  width: 16px;
  height: 16px;
}
.Task span {
  flex: 1;
  text-align: left;
}
.Task b {
  font-family: "Liberation Sans", sans-serif;
}
.Task.-group::after {
  content: "";
  border: solid transparent;
  border-width: 3px 3px 0;
  border-top-color: #fff;
  margin-right: -5px;
}
.Task.-active {
  background: #1b49ac;
}
.LangBar,
.Tray {
  display: flex;
  align-items: center;
  gap: 6px;
}
.LangBar {
  padding: 0 18px 0 2px;
}
.LangBar svg,
.Tray svg {
  width: 16px;
  height: 16px;
}
.LangBar svg.-tall {
  width: 10px;
  height: 20px;
}
.Tray {
  gap: 2px;
  padding: 0 12px 0 9px;
  border-left: 1px solid #0b3a9c;
  background: linear-gradient(#3cb4fc, #1290e8 15%, #1192ea 85%, #0c6cc0);
}
.Tray time {
  margin-left: 8px;
}
```
